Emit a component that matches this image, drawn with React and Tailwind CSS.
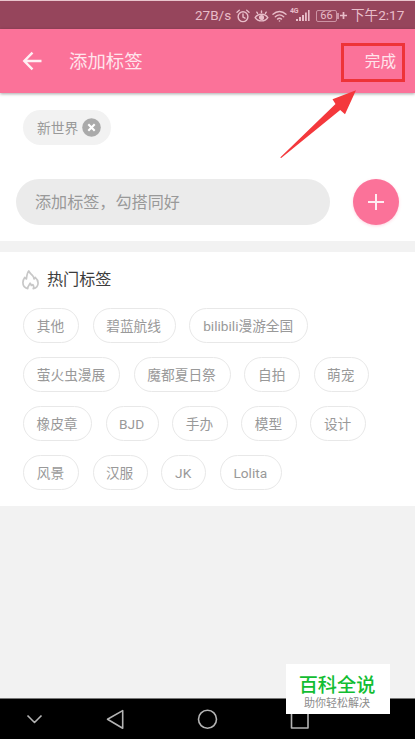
import React from "react";

const rows = [
  [["其他", "w-[56px]"], ["碧蓝航线", "w-[83px]"], ["bilibili漫游全国", "w-[119px]"]],
  [["萤火虫漫展", "w-[97px]"], ["魔都夏日祭", "w-[97px]"], ["自拍", "w-[56px]"], ["萌宠", "w-[55px]"]],
  [["橡皮章", "w-[69px]"], ["BJD", "w-[53px]"], ["手办", "w-[55.5px]"], ["模型", "w-[55.5px]"], ["设计", "w-[55.5px]"]],
  [["风景", "w-[56px]"], ["汉服", "w-[55px]"], ["JK", "w-[45px]"], ["Lolita", "w-[62px]"]],
];

function StatusBar() {
  return (
    <div className="flex h-[29px] items-center border-t border-[#e8c4cc] bg-[#96455c] pt-px pl-[195px] text-[13.5px] leading-none text-[#e8bdc9]">
      <span className="w-[41px] whitespace-nowrap">27B/s</span>
      <svg className="mr-[4px] h-[14px] w-[14px] shrink-0" viewBox="0 0 14 14" fill="none" stroke="currentColor" strokeWidth="1.4" strokeLinecap="round">
        <circle cx="7" cy="7.7" r="4.9" />
        <path d="M7 5v3l2 1.2M1 3.2 3.3 1.3M13 3.2 10.7 1.3" />
      </svg>
      <svg className="mr-[3px] h-[14px] w-[15px] shrink-0" viewBox="0 0 15 14" fill="none" stroke="currentColor" strokeWidth="1.4" strokeLinecap="round">
        <path d="M1.2 8.6C4 4.2 11 4.2 13.8 8.6 11 13 4 13 1.2 8.6Z" />
        <circle cx="7.5" cy="8.5" r="1.9" fill="currentColor" />
        <path d="M7.5 3.4V2M3.6 4.4 2.8 3.2M11.4 4.4l.8-1.2" />
      </svg>
      <svg className="mr-[3px] h-[14px] w-[15px] shrink-0" viewBox="0 0 15 14" fill="none" stroke="currentColor" strokeWidth="1.4" strokeLinecap="round">
        <path d="M1 5.2c3.8-3.6 9.2-3.6 13 0M3.3 7.8c2.6-2.4 5.8-2.4 8.4 0M5.5 10.1c1.3-1.1 2.7-1.1 4 0" />
        <circle cx="7.5" cy="12" r="0.8" fill="currentColor" stroke="none" />
      </svg>
      <span className="mb-[8px] w-[6px] text-[7px] font-bold tracking-tighter">4G</span>
      <svg className="mr-[6px] h-[13px] w-[14px] shrink-0" viewBox="0 0 14 13" fill="currentColor">
        <path d="M0 10h2v2H0zM3 8h2v4H3zM6 6h2v6H6zM9 3.5h1.8V12H9zM12 1h1.6v11H12z" />
      </svg>
      <span className="flex h-[12px] w-[21px] shrink-0 items-center justify-center rounded-[2px] border border-[#cc93a4] text-[11px]">66</span>
      <span className="h-[6px] w-[2px] shrink-0 bg-[#cc93a4]" />
      <svg className="mr-[4px] ml-[1px] h-[7px] w-[7px] shrink-0" viewBox="0 0 7 7" stroke="currentColor" strokeWidth="1.7">
        <path d="M3.5 0v7M0 3.5h7" />
      </svg>
      <span className="pt-px text-[13.6px] whitespace-nowrap">下午2:17</span>
    </div>
  );
}

function Header() {
  return (
    <header className="relative z-10 flex h-[64px] items-center bg-[#fb7299] text-[#ffe4ec] shadow-[0_1px_3px_rgba(0,0,0,0.35)]">
      <svg className="ml-[22px] h-[20px] w-[21px]" viewBox="0 0 21 20" fill="none" stroke="#fff0f4" strokeWidth="2.4">
        <path d="M19.5 10H2.5M10.5 1.7 2.3 10l8.2 8.3" />
      </svg>
      <h1 className="ml-[26px] pt-[2px] text-[18.4px] leading-none">添加标签</h1>
      <div className="mt-[3px] mr-[10px] ml-auto flex h-[39px] w-[64px] items-center justify-end border-3 border-[#ee3338] pr-[6px] pt-px text-[15.6px]">
        完成
      </div>
      <svg className="absolute top-[60px] left-[278px] h-[72px] w-[82px]" viewBox="0 0 82 72">
        <path d="M2.2 68.5 57.5 15l-3-4.7L78 1.2l-11 24-4.8-4.2L3.2 69Z" fill="#f4383c" />
      </svg>
    </header>
  );
}

export default function App() {
  return (
    <div className="relative flex h-[739px] w-[415px] flex-col overflow-hidden bg-[#f2f2f2] font-[Roboto,'Noto_Sans_CJK_SC',sans-serif]">
      <StatusBar />
      <Header />
      <section className="h-[148px] bg-white pt-[17px]">
        <div className="ml-[23px] flex h-[35px] w-[88px] items-center rounded-full bg-[#f2f2f2] pl-[14px] text-[13.8px] text-[#999]">
          <span className="pt-[2px] whitespace-nowrap">新世界</span>
          <svg className="ml-[4px] h-[19px] w-[19px] shrink-0" viewBox="0 0 19 19">
            <circle cx="9.5" cy="9.5" r="9.3" fill="#aaa" />
            <path d="m6.3 6.3 6.4 6.4m0-6.4-6.4 6.4" stroke="#fff" strokeWidth="2.1" />
          </svg>
        </div>
        <div className="mt-[34px] flex items-center">
          <div className="ml-[16px] flex h-[46px] w-[314px] items-center rounded-full bg-[#ebebeb] pt-[2px] pl-[19px] text-[16.1px] text-[#999]">
            添加标签，勾搭同好
          </div>
          <button className="ml-[23px] flex h-[46px] w-[46px] items-center justify-center rounded-full bg-[#fb7299] shadow-[0_1px_3px_rgba(251,114,153,0.3)]">
            <svg className="h-[16px] w-[16px]" viewBox="0 0 16 16" stroke="#ffedf2" strokeWidth="2">
              <path d="M8 0v16M0 8h16" />
            </svg>
          </button>
        </div>
      </section>
      <section className="mt-[11px] h-[254px] bg-white">
        <div className="flex h-[56px] items-center pl-[22px] text-[16.1px] text-[#3c3c3c]">
          <svg className="mt-[-1px] mr-[8px] h-[20px] w-[17px]" viewBox="0 0 17 20" fill="none" stroke="#c8c8c8" strokeWidth="1.7" strokeLinejoin="round" strokeLinecap="round">
            <path d="M5.7 18.6C2.6 18 .9 15.5.9 12.6c0-2.2.8-3.8 1.8-5.2.5 1 .9 1.4 1.7 1.6C4.8 5.8 5 3 6.7 1c1.3 2.5 2.7 3.2 4 4.8.9 1.2 1.2 2.1 1.3 3.2.6-.4.9-.9 1.2-1.6 1.8 1.5 2.9 3.2 2.9 5.6 0 3-1.8 5-4.9 5.6.9-1.4.6-2.7-.4-4-.5.6-.9.8-1.5.9-.1-1-.5-1.6-1.1-2.3-.9 1.7-2.6 3-2.5 5.4Z" />
          </svg>
          <h2>热门标签</h2>
        </div>
        <div className="flex flex-col gap-[14px] pl-[23px]">
          {rows.map((row, i) => (
            <div key={i} className="flex gap-[13.6px]">
              {row.map(([label, width]) => (
                <span key={label} className={`${width} flex h-[35px] items-center justify-center rounded-full border-[1.5px] border-[#e8e8e8] pt-[2px] pr-px text-[13.7px] whitespace-nowrap text-[#999]`}>
                  {label}
                </span>
              ))}
            </div>
          ))}
        </div>
      </section>
      <nav className="mt-auto h-[41px] border-t border-[#777] bg-black">
        <svg className="h-[40px] w-[415px]" viewBox="0 0 415 40" fill="none" stroke="#b4b4b4" strokeWidth="1.6">
          <path d="m27.5 16.5 7 7 7-7M107.5 20.3 122.7 11.6v17.6ZM291.5 12h16.5v17h-16.5Z" strokeLinejoin="round" />
          <circle cx="207.5" cy="20.3" r="9" />
        </svg>
      </nav>
      <div className="absolute top-[664px] left-[286px] flex h-[50px] w-[104px] flex-col items-center bg-white pr-[2px]">
        <strong className="mt-[11px] text-[19.2px] leading-[21px] font-medium text-[#12bd32]">百科全说</strong>
        <span className="mt-[1px] text-[11px] leading-[13px] text-[#8c8c8c]">助你轻松解决</span>
      </div>
    </div>
  );
}
